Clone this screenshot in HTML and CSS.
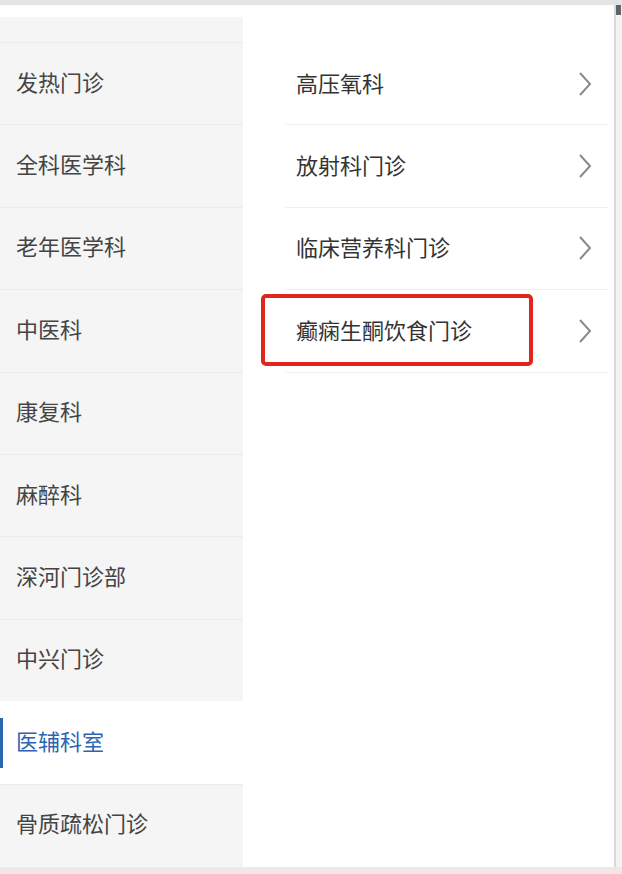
FILE: index.html
```html
<!DOCTYPE html>
<html lang="zh-CN">

<head>
    <meta charset="UTF-8">
    <meta name="viewport" content="width=device-width, initial-scale=1.0">
    <title>科室列表</title>
    <link rel="stylesheet" href="styles.css">
</head>

<body>
    <div id="top-bar"></div>
    <div id="frame">
        <div id="dept-list">
            <div class="dept-item dept-cut"></div>
            <div class="dept-item">发热门诊</div>
            <div class="dept-item">全科医学科</div>
            <div class="dept-item">老年医学科</div>
            <div class="dept-item">中医科</div>
            <div class="dept-item">康复科</div>
            <div class="dept-item">麻醉科</div>
            <div class="dept-item">深河门诊部</div>
            <div class="dept-item">中兴门诊</div>
            <div class="dept-item active">医辅科室</div>
            <div class="dept-item">骨质疏松门诊</div>
        </div>
        <div id="sub-list">
            <div class="sub-item">
                <span>高压氧科</span>
                <svg class="arrow" width="14" height="26" viewBox="0 0 14 26"><path d="M2 2 L12 13 L2 24" fill="none" stroke="#8a8a8a" stroke-width="2"/></svg>
            </div>
            <div class="sub-item">
                <span>放射科门诊</span>
                <svg class="arrow" width="14" height="26" viewBox="0 0 14 26"><path d="M2 2 L12 13 L2 24" fill="none" stroke="#8a8a8a" stroke-width="2"/></svg>
            </div>
            <div class="sub-item">
                <span>临床营养科门诊</span>
                <svg class="arrow" width="14" height="26" viewBox="0 0 14 26"><path d="M2 2 L12 13 L2 24" fill="none" stroke="#8a8a8a" stroke-width="2"/></svg>
            </div>
            <div class="sub-item marked">
                <span>癫痫生酮饮食门诊</span>
                <svg class="arrow" width="14" height="26" viewBox="0 0 14 26"><path d="M2 2 L12 13 L2 24" fill="none" stroke="#8a8a8a" stroke-width="2"/></svg>
                <div id="red-box"></div>
            </div>
        </div>
        <div id="side-edge"><div class="edge-mark"></div></div>
    </div>
    <div id="bottom-bar"></div>
</body>

</html>
```

FILE: styles.css
```css
html,
body {
    margin: 0;
    height: 100%;
    background: #fff;
    font-family: "Noto Sans CJK SC", "Liberation Sans", sans-serif;
    overflow: hidden;
}

#top-bar {
    height: 5px;
    background: #e4e4e4;
}

#frame {
    display: flex;
    height: 862px;
}

#dept-list {
    width: 243px;
    margin-top: 12px;
    background: #f5f5f5;
    overflow: hidden;
}

.dept-item {
    height: 82.4px;
    box-sizing: border-box;
    border-top: 1px solid #ebebeb;
    padding: 0 0 6px 16px;
    display: flex;
    align-items: center;
    font-size: 22px;
    color: #444;
    position: relative;
}

.dept-cut {
    height: 25px;
    border-top: none;
    padding: 0;
}

.dept-item.active {
    background: #fff;
    color: #2f64b2;
    border-top-color: #fff;
}

.dept-item.active::before {
    content: "";
    position: absolute;
    left: 0;
    top: 16px;
    width: 3px;
    height: 50px;
    background: #2f64b2;
}

#sub-list {
    width: 371px;
    padding-top: 38px;
    box-sizing: border-box;
}

.sub-item {
    height: 82.4px;
    box-sizing: border-box;
    margin: 0 6px 0 42px;
    padding: 0 16px 0 11px;
    border-bottom: 1px solid #efefef;
    display: flex;
    align-items: center;
    justify-content: space-between;
    font-size: 22px;
    color: #333;
    position: relative;
}

.sub-item span {
    margin-bottom: 4px;
}

.arrow {
    display: block;
}

#red-box {
    position: absolute;
    left: -24px;
    top: 4px;
    width: 272px;
    height: 72px;
    box-sizing: border-box;
    border: 4px solid #e0261d;
    border-radius: 5px;
}

#side-edge {
    width: 6px;
    border-left: 2px solid #d9d9d9;
    background: #f4f4f4;
    overflow: hidden;
}

.edge-mark {
    width: 5px;
    height: 12px;
    margin-top: -2px;
    background: #3a3f4a;
    opacity: 0.8;
}

#bottom-bar {
    height: 7px;
    background: #f2e6ea;
}
```
